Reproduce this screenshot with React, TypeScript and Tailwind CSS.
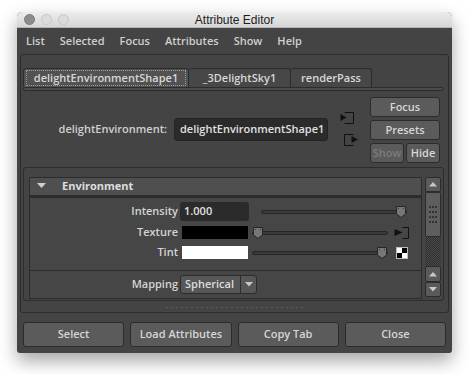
import React from "react";

const font = "font-['Open_Sans','Liberation_Sans',sans-serif]";

function Thumb() {
  return (
    <svg width="12" height="14" viewBox="0 0 12 14" className="shrink-0">
      <path d="M1.5 1.5 H10.5 V9 L6 12.5 L1.5 9 Z" fill="#767676" stroke="#262626" strokeWidth="1" />
      <rect x="3" y="3" width="1" height="1" fill="#333" />
      <rect x="8" y="3" width="1" height="1" fill="#333" />
    </svg>
  );
}

function Slider({ width, pos }: { width: number; pos: "start" | "end" }) {
  return (
    <div className="relative flex items-center h-[14px]" style={{ width }}>
      <div className="h-[4px] w-full rounded-full bg-[#3a3a3a] border border-[#262626]" />
      <div className={`absolute top-0 ${pos === "start" ? "left-0" : "right-0"}`}>
        <Thumb />
      </div>
    </div>
  );
}

function InIcon() {
  return (
    <svg width="15" height="14" viewBox="0 0 15 14">
      <path d="M4.5 1.5 H13.5 V12.5 H4.5" fill="none" stroke="#111" strokeWidth="1" />
      <path d="M0.5 3 L6.5 6.5 L0.5 10 Z" fill="#111" />
    </svg>
  );
}

function OutIcon() {
  return (
    <svg width="16" height="14" viewBox="0 0 16 14">
      <path d="M10.5 1.5 H1.5 V12.5 H10.5" fill="none" stroke="#111" strokeWidth="1" />
      <path d="M8.5 3 L15 6.5 L8.5 10 Z" fill="#111" />
    </svg>
  );
}

function Btn({ children, className = "", dim = false }: { children: React.ReactNode; className?: string; dim?: boolean }) {
  return (
    <div
      className={`flex items-center justify-center rounded-[3px] border border-[#2b2b2b] bg-[#5b5b5b] text-[11px] font-semibold ${
        dim ? "text-[#7c7c7c]" : "text-[#d6d6d6]"
      } ${className}`}
    >
      {children}
    </div>
  );
}

export default function App() {
  return (
    <div className={`w-[469px] h-[374px] bg-white pt-[12px] pl-[17px] ${font}`}>
      <div className="w-[435px] h-[341px] flex flex-col bg-[#444444] rounded-t-[5px] rounded-b-[3px] shadow-[0_8px_18px_rgba(0,0,0,0.35)]">
        {/* title bar */}
        <div className="relative h-[16px] flex items-center rounded-t-[5px] bg-gradient-to-b from-[#ececec] to-[#d6d6d6] border-b border-[#b5b5b5]">
          <div className="flex gap-[6px] pl-[7px]">
            <span className="w-[11px] h-[11px] rounded-full bg-[#8c8c8e] border border-[#7a7a7c]" />
            <span className="w-[11px] h-[11px] rounded-full bg-[#dcdcdc] border border-[#c6c6c6]" />
            <span className="w-[11px] h-[11px] rounded-full bg-[#dcdcdc] border border-[#c6c6c6]" />
          </div>
          <div className="absolute inset-0 flex items-center justify-center text-[12px] text-[#1d1d1d] font-['Liberation_Sans',sans-serif]">
            Attribute Editor
          </div>
        </div>

        {/* menu bar */}
        <div className="h-[26px] flex items-center pl-[9px] gap-[15px] text-[11px] font-semibold text-[#cfcfcf]">
          <span>List</span>
          <span>Selected</span>
          <span>Focus</span>
          <span>Attributes</span>
          <span>Show</span>
          <span>Help</span>
        </div>

        {/* main panel */}
        <div className="mx-[3px] h-[259px] rounded-[3px] border border-[#2c2c2c] flex flex-col px-[2px] pt-[13px]">
          {/* tabs */}
          <div className="flex h-[19px] text-[11px] font-semibold text-[#d8d8d8]">
            <div className="w-[166px] flex items-center justify-center rounded-t-[3px] border border-b-0 border-[#2c2c2c] bg-[#525252]">
              <span className="px-[7px] border border-dotted border-[#9a9a9a] leading-[14px]">delightEnvironmentShape1</span>
            </div>
            <div className="w-[102px] flex items-center justify-center rounded-t-[3px] border border-b-0 border-l-0 border-[#2c2c2c] bg-[#474747]">
              _3DelightSky1
            </div>
            <div className="w-[81px] flex items-center justify-center rounded-t-[3px] border border-b-0 border-l-0 border-[#2c2c2c] bg-[#474747]">
              renderPass
            </div>
          </div>
          <div className="h-[4px] mr-[2px] rounded-[2px] border border-[#2c2c2c] bg-[#4c4c4c]" />

          {/* node row */}
          <div className="flex items-start mt-[6px] h-[65px]">
            <div className="flex items-center h-[64px]">
              <span className="text-[11px] font-semibold text-[#d0d0d0] w-[144px] text-right whitespace-nowrap">delightEnvironment:</span>
              <div className="ml-[7px] w-[154px] h-[23px] rounded-[3px] bg-[#2b2b2b] border border-[#242424] flex items-center pl-[5px] text-[11px] font-semibold text-[#e0e0e0]">
                delightEnvironmentShape1
              </div>
            </div>
            <div className="flex flex-col ml-[12px] mt-[14px] gap-[8px]">
              <InIcon />
              <div className="ml-[3px]">
                <OutIcon />
              </div>
            </div>
            <div className="flex flex-col ml-[11px] gap-[3px]">
              <Btn className="w-[70px] h-[20px]">Focus</Btn>
              <Btn className="w-[70px] h-[20px]">Presets</Btn>
              <div className="flex gap-[2px]">
                <Btn className="w-[34px] h-[20px]" dim>
                  Show
                </Btn>
                <Btn className="w-[34px] h-[20px]">Hide</Btn>
              </div>
            </div>
          </div>

          {/* attribute frame */}
          <div className="mt-[5px] mr-[2px] h-[134px] rounded-[3px] border border-[#2c2c2c] flex pl-[5px] pr-[2px] pt-[9px] pb-[3px] gap-[3px]">
            <div className="flex-1 flex flex-col">
              <div className="h-[22px] flex items-center rounded-t-[2px] border border-[#2c2c2c] bg-[#4f4f4f] text-[11px] font-bold text-[#dedede]">
                <svg width="10" height="6" viewBox="0 0 10 6" className="ml-[7px]">
                  <path d="M0 0 H9 L4.5 5 Z" fill="#d0d0d0" />
                </svg>
                <span className="ml-[15px]">Environment</span>
              </div>
              <div className="flex-1 border border-t-[2px] border-[#2c2c2c] bg-[#464646] flex flex-col text-[11px] font-semibold text-[#d4d4d4]">
                <div className="flex items-center h-[22px] mt-[3px]">
                  <span className="w-[148px] text-right">Intensity</span>
                  <div className="ml-[2px] w-[69px] h-[19px] rounded-[3px] bg-[#2b2b2b] flex items-center pl-[4px] text-[#e2e2e2]">1.000</div>
                  <div className="ml-[12px]">
                    <Slider width={146} pos="end" />
                  </div>
                </div>
                <div className="flex items-center h-[20px]">
                  <span className="w-[148px] text-right">Texture</span>
                  <div className="ml-[4px] w-[66px] h-[13px] bg-black" />
                  <div className="ml-[4px]">
                    <Slider width={136} pos="start" />
                  </div>
                  <div className="ml-[6px]">
                    <svg width="16" height="14" viewBox="0 0 16 14">
                      <path d="M8.5 1.5 H14.5 V12.5 H8.5" fill="none" stroke="#111" strokeWidth="1" />
                      <path d="M0.5 3 L8.5 6.5 L0.5 10 Z" fill="#111" />
                    </svg>
                  </div>
                </div>
                <div className="flex items-center h-[20px]">
                  <span className="w-[148px] text-right">Tint</span>
                  <div className="ml-[4px] w-[66px] h-[13px] bg-white" />
                  <div className="ml-[4px]">
                    <Slider width={136} pos="end" />
                  </div>
                  <div className="ml-[8px] w-[12px] h-[12px] border border-[#bdbdbd] grid grid-cols-2">
                    <span className="bg-white" />
                    <span className="bg-black" />
                    <span className="bg-black" />
                    <span className="bg-white" />
                  </div>
                </div>
                <div className="mt-[7px] border-t border-[#2c2c2c]" />
                <div className="flex items-center h-[26px] mt-[1px]">
                  <span className="w-[148px] text-right">Mapping</span>
                  <div className="ml-[2px] w-[77px] h-[19px] rounded-[3px] border border-[#2c2c2c] bg-[#575757] flex items-center text-[#dcdcdc]">
                    <span className="flex-1 pl-[4px]">Spherical</span>
                    <div className="w-[16px] h-full border-l border-[#2c2c2c] flex items-center justify-center">
                      <svg width="8" height="5" viewBox="0 0 8 5">
                        <path d="M0 0 H8 L4 4.5 Z" fill="#c8c8c8" />
                      </svg>
                    </div>
                  </div>
                </div>
              </div>
            </div>
            {/* scrollbar */}
            <div className="w-[16px] flex flex-col">
              <div className="h-[15px] rounded-[2px] border border-[#2c2c2c] bg-[#5a5a5a] flex items-center justify-center">
                <svg width="8" height="5" viewBox="0 0 8 5">
                  <path d="M0 4.5 H8 L4 0 Z" fill="#c8c8c8" />
                </svg>
              </div>
              <div className="h-[45px] rounded-[2px] border border-[#2c2c2c] bg-[#5e5e5e] grid grid-cols-3 gap-y-[3px] px-[3px] py-[13px] place-items-center">
                {Array.from({ length: 12 }).map((_, i) => (
                  <span key={i} className="w-[2px] h-[2px] bg-[#333]" />
                ))}
              </div>
              <div className="flex-1 bg-[repeating-conic-gradient(#2f2f2f_0_25%,#4a4a4a_0_50%)] bg-[length:2px_2px]" />
              <div className="h-[16px] rounded-[2px] border border-[#2c2c2c] bg-[#5a5a5a] flex items-center justify-center">
                <svg width="8" height="5" viewBox="0 0 8 5">
                  <path d="M0 4.5 H8 L4 0 Z" fill="#c8c8c8" />
                </svg>
              </div>
              <div className="h-[15px] rounded-[2px] border border-[#2c2c2c] bg-[#5a5a5a] flex items-center justify-center">
                <svg width="8" height="5" viewBox="0 0 8 5">
                  <path d="M0 0 H8 L4 4.5 Z" fill="#c8c8c8" />
                </svg>
              </div>
            </div>
          </div>

          {/* grip */}
          <div className="flex justify-center mt-[6px] gap-[3px]">
            {Array.from({ length: 28 }).map((_, i) => (
              <span key={i} className="w-[2px] h-[1px] bg-[#5c5c5c]" />
            ))}
          </div>
        </div>

        {/* bottom buttons */}
        <div className="flex gap-[6px] px-[6px] mt-[9px]">
          <Btn className="flex-1 h-[25px]">Select</Btn>
          <Btn className="flex-1 h-[25px]">Load Attributes</Btn>
          <Btn className="flex-1 h-[25px]">Copy Tab</Btn>
          <Btn className="flex-1 h-[25px]">Close</Btn>
        </div>
      </div>
    </div>
  );
}
